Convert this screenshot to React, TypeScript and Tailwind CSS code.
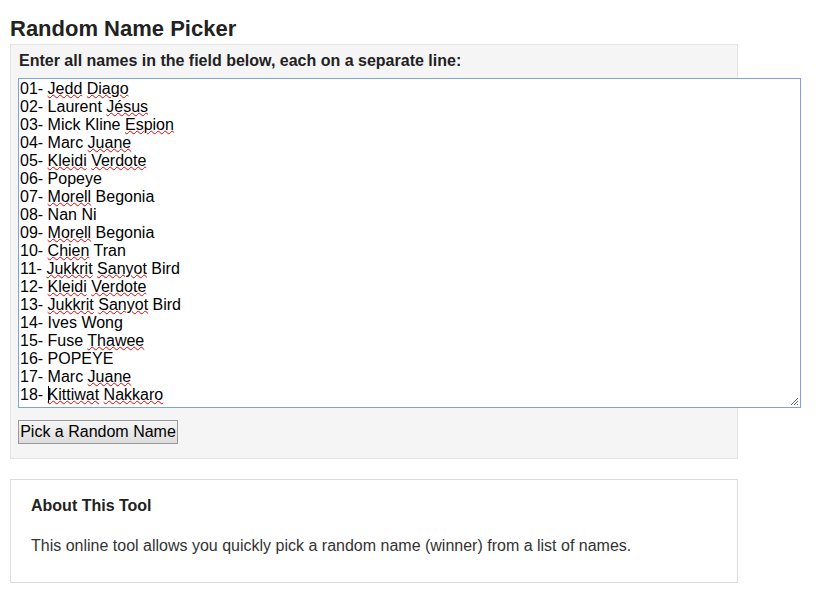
const names: { n: string; words: { t: string; bad?: boolean }[] }[] = [
  { n: "01", words: [{ t: "Jedd", bad: true }, { t: "Diago", bad: true }] },
  { n: "02", words: [{ t: "Laurent" }, { t: "Jésus", bad: true }] },
  { n: "03", words: [{ t: "Mick" }, { t: "Kline" }, { t: "Espion", bad: true }] },
  { n: "04", words: [{ t: "Marc" }, { t: "Juane", bad: true }] },
  { n: "05", words: [{ t: "Kleidi", bad: true }, { t: "Verdote", bad: true }] },
  { n: "06", words: [{ t: "Popeye" }] },
  { n: "07", words: [{ t: "Morell", bad: true }, { t: "Begonia" }] },
  { n: "08", words: [{ t: "Nan" }, { t: "Ni" }] },
  { n: "09", words: [{ t: "Morell", bad: true }, { t: "Begonia" }] },
  { n: "10", words: [{ t: "Chien", bad: true }, { t: "Tran" }] },
  { n: "11", words: [{ t: "Jukkrit", bad: true }, { t: "Sanyot", bad: true }, { t: "Bird" }] },
  { n: "12", words: [{ t: "Kleidi", bad: true }, { t: "Verdote", bad: true }] },
  { n: "13", words: [{ t: "Jukkrit", bad: true }, { t: "Sanyot", bad: true }, { t: "Bird" }] },
  { n: "14", words: [{ t: "Ives" }, { t: "Wong" }] },
  { n: "15", words: [{ t: "Fuse" }, { t: "Thawee", bad: true }] },
  { n: "16", words: [{ t: "POPEYE" }] },
  { n: "17", words: [{ t: "Marc" }, { t: "Juane", bad: true }] },
  { n: "18", words: [{ t: "Kittiwat", bad: true }, { t: "Nakkaro", bad: true }] },
];

const App = () => {
  return (
    <div className="min-h-[598px] bg-white px-[10px] pt-[16px] font-['Liberation_Sans',Arial,sans-serif] text-[#222]">
      <h1 className="text-[22px] font-bold leading-[26px] mb-[2px]">Random Name Picker</h1>

      {/* picker panel */}
      <div className="w-[728px] border border-[#e3e3e3] bg-[#f5f5f5] px-[7px] pt-[7px] pb-[14px]">
        <div className="text-[16px] font-bold leading-[18px] mb-[8px] pl-[1px]">
          Enter all names in the field below, each on a separate line:
        </div>
        <div className="relative w-[783px] h-[330px] border border-[#7da2e3] bg-white pl-[1px] pt-[1px] text-[16px] leading-[18px] text-black overflow-hidden">
          {names.map((row, i) => (
            <div key={row.n} className="whitespace-pre">
              {row.n}-{" "}
              {i === names.length - 1 && <span className="inline-block w-[1px] h-[17px] bg-black align-[-3px] -mr-[1px]" />}
              {row.words.map((w, j) => (
                <span key={j}>
                  <span className={w.bad ? "underline decoration-wavy decoration-[#e00] decoration-1 underline-offset-[0px]" : ""}>{w.t}</span>
                  {j < row.words.length - 1 ? " " : ""}
                </span>
              ))}
            </div>
          ))}
          <svg className="absolute right-[1px] bottom-[1px]" width="10" height="10" viewBox="0 0 10 10">
            <path d="M9 2 L2 9 M9 5 L5 9 M9 8 L8 9" stroke="#666" strokeWidth="1" />
          </svg>
        </div>
        <button className="mt-[12px] h-[24px] w-[160px] border border-[#999] bg-gradient-to-b from-[#f6f6f6] to-[#dddddd] text-[16px] leading-[20px] text-black">
          Pick a Random Name
        </button>
      </div>

      {/* about */}
      <div className="mt-[20px] w-[728px] border border-[#ddd] bg-white px-[20px] pt-[16px] pb-[26px] text-[#333]">
        <h2 className="text-[16px] font-bold leading-[20px] text-[#222]">About This Tool</h2>
        <p className="mt-[20px] text-[16px] leading-[20px]">
          This online tool allows you quickly pick a random name (winner) from a list of names.
        </p>
      </div>
    </div>
  );
};

export default App;
